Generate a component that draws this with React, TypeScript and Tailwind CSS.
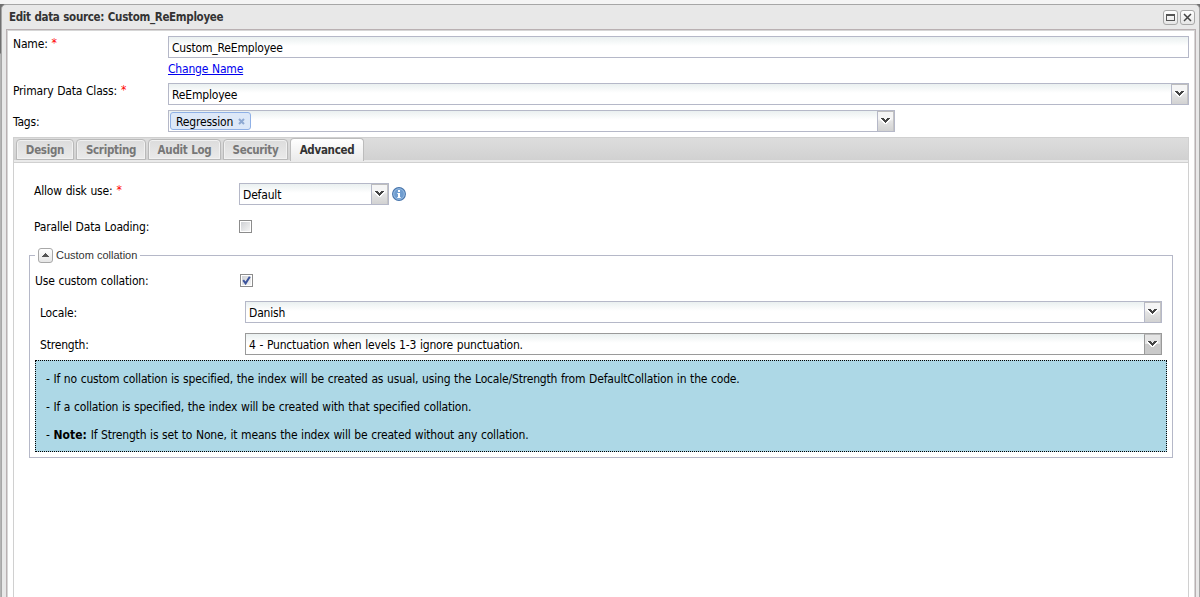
import type { ReactNode } from "react";

type ComboProps = {
  value?: string;
  className?: string;
  focused?: boolean;
  children?: ReactNode;
};

// Pixel arrow used by every combo trigger
function Trigger({ focused = false }: { focused?: boolean }) {
  return (
    <div
      className={`flex w-[17px] shrink-0 justify-center border-l border-t border-r border-t-[#bdbdbd] border-r-[#c4c4c4] pt-[5px] ${
        focused
          ? "border-l-[#9a9a9a] bg-linear-to-b from-[#e4e4e4] from-45% to-[#c9c9c9] to-50%"
          : "border-l-[#b5b8c8] bg-linear-to-b from-[#f5f5f5] from-35% via-[#e3e3e3] via-50% to-[#d2d2d2]"
      }`}
    >
      <svg width="11" height="8" viewBox="0 0 11 8" shapeRendering="crispEdges">
        <path d="M0 1h4v1h3V1h4v2h-1v1H9v1H8v1H7v1H4V6H3V5H2V4H1V3H0z" fill="#fff" />
        <path d="M1 1h3v1h1v1h1V2h1V1h3v1H9v1H8v1H7v1H6v1H5V5H4V4H3V3H2V2H1z" fill="#444" />
      </svg>
    </div>
  );
}

function Combo({ value, className = "", focused = false, children }: ComboProps) {
  return (
    <div
      className={`flex h-[22px] border ${focused ? "border-[#9a9a9a]" : "border-[#b5b8c8]"} ${className}`}
    >
      <div className="flex min-w-0 flex-1 items-center bg-linear-to-b from-[#eaf0f0] to-white to-45% pl-[3px]">
        {children}
        {value && <span className="whitespace-nowrap pt-px">{value}</span>}
      </div>
      <Trigger focused={focused} />
    </div>
  );
}

function Checkbox({ checked = false }: { checked?: boolean }) {
  return (
    <div className="flex size-[13px] items-center justify-center border border-[#8c8c8c] bg-white">
      <div className="size-[9px] bg-linear-to-br from-[#cfd1d5] to-[#f4f4f4]">
        {checked && (
          <svg width="9" height="9" viewBox="0 0 9 9">
            <path d="M1.2 4.2 3.6 7.4 7.8 0.8" fill="none" stroke="#3c549c" strokeWidth="2" />
          </svg>
        )}
      </div>
    </div>
  );
}

function Tool({ children }: { children: ReactNode }) {
  return (
    <div className="flex size-[15px] items-center justify-center rounded-[3px] border border-[#a8a8a8] bg-linear-to-b from-white to-[#e6e6e6]">
      {children}
    </div>
  );
}

const Star = () => <span className="ml-[4px] align-[1px] leading-none text-[#ff0000]">*</span>;

const tabs = [
  { name: "Design", width: "w-[58px]" },
  { name: "Scripting", width: "w-[70px]" },
  { name: "Audit Log", width: "w-[73px]" },
  { name: "Security", width: "w-[65px]" },
  { name: "Advanced", width: "w-[74px]" },
];

function TabBar({ active }: { active: string }) {
  return (
    <div className="h-[26px] border border-[#d0d0d0] bg-[#eaeaea]">
      <div className="flex h-[22px] items-end gap-[2px] bg-linear-to-b from-[#dddddd] to-[#d1d1d1] pl-[2px]">
        {tabs.map((tab) => (
          <div
            key={tab.name}
            className={`flex items-center justify-center rounded-t-[4px] border text-[11.5px] font-bold tracking-[-0.3px] ${tab.width} ${
              tab.name === active
                ? "relative z-10 -mb-px h-[23px] border-[#bcbcbc] border-b-0 bg-linear-to-b from-white to-[#eaeaea] pb-px text-[#333]"
                : "h-[21px] border-[#b9b9b9] bg-linear-to-b from-[#dcdcdc] to-[#eaeaea] text-[#777] shadow-[inset_0_0_0_1px_#f1f1f1]"
            }`}
          >
            <span className="whitespace-nowrap">{tab.name}</span>
          </div>
        ))}
      </div>
    </div>
  );
}

function Collation() {
  return (
    <div className="relative mx-[15px] mt-[22px] h-[203px] border border-[#b5b8c8] px-[5px]">
      {/* Legend sits over the top border */}
      <div className="absolute -top-[8px] left-[5px] flex h-[15px] items-center bg-white pl-[3px] pr-[3px]">
        <Tool>
          <svg width="9" height="5" viewBox="0 0 9 5" shapeRendering="crispEdges">
            <path d="M4 0h1v1h1v1h1v1h1v1H1V3h1V2h1V1h1z" fill="#555" />
          </svg>
        </Tool>
        <span className="-mt-px ml-[3px] whitespace-nowrap font-['Liberation_Sans'] text-[11px] tracking-normal text-[#333] [word-spacing:0]">
          Custom collation
        </span>
      </div>

      <div className="flex h-[45px] items-start pt-[18px]">
        <span className="w-[205px]">Use custom collation:</span>
        <Checkbox checked />
      </div>
      <div className="flex h-[32px] items-start pl-[5px] pr-[5px]">
        <span className="w-[205px] pt-[5px]">Locale:</span>
        <Combo value="Danish" className="flex-1" />
      </div>
      <div className="flex h-[27px] items-start pl-[5px] pr-[5px]">
        <span className="w-[205px] pt-[5px]">Strength:</span>
        <Combo value="4 - Punctuation when levels 1-3 ignore punctuation." className="flex-1" focused />
      </div>
      <div className="h-[92px] border border-dotted border-black bg-[#add8e6] pl-[10px] pt-[4px] leading-[28px]">
        <p>- If no custom collation is specified, the index will be created as usual, using the Locale/Strength from DefaultCollation in the code.</p>
        <p>- If a collation is specified, the index will be created with that specified collation.</p>
        <p>
          - <b className="tracking-[0.05px]">Note:</b> If Strength is set to None, it means the index will be created without any collation.
        </p>
      </div>
    </div>
  );
}

export default function App() {
  return (
    <div className="h-[597px] w-[1200px] overflow-hidden bg-linear-to-b from-[#707070] from-[53px] to-[#b4b4b4] to-[54px] font-['DejaVu_Sans_Condensed','DejaVu_Sans',sans-serif] text-[12px] leading-[14px] tracking-[-0.18px] text-black [font-stretch:condensed] [word-spacing:0.5px]">
      <div className="h-[4px] bg-[#f4f4f4]" />
      <div className="ml-px flex h-[600px] flex-col rounded-t-[5px] border border-[#a6a6a6] bg-[#e8e8e8] px-[4px]">
        <div className="flex h-[24px] shrink-0 items-center justify-between pl-[3px] text-[#333]">
          <span className="text-[11.5px] font-bold tracking-[-0.32px]">Edit data source: Custom_ReEmployee</span>
          <div className="flex gap-[2px]">
            <Tool>
              <svg width="9" height="7" viewBox="0 0 9 7" shapeRendering="crispEdges">
                <path d="M0 0h9v7H0zM1 2v4h7V2z" fill="#555" fillRule="evenodd" />
              </svg>
            </Tool>
            <Tool>
              <svg width="9" height="9" viewBox="0 0 9 9">
                <path d="M1 1l7 7M8 1L1 8" stroke="#444" strokeWidth="1.5" />
              </svg>
            </Tool>
          </div>
        </div>

        <div className="mr-[-1px] flex-1 border border-[#b9b0b2] bg-white">
          <div className="h-full border border-[#d6d6d6] px-[5px] pt-[5px]">
            <div className="flex h-[47px]">
              <span className="w-[155px] pt-px">Name:<Star /></span>
              <div className="flex-1">
                <div className="flex h-[22px] items-center border border-[#b5b8c8] bg-linear-to-b from-[#eaf0f0] to-white to-45% pl-[3px] pt-px">
                  Custom_ReEmployee
                </div>
                <a className="mt-[4px] inline-block text-[#0000ee] underline">Change Name</a>
              </div>
            </div>
            <div className="flex h-[27px]">
              <span className="w-[155px] pt-px">Primary Data Class:<Star /></span>
              <Combo value="ReEmployee" className="flex-1" />
            </div>
            <div className="flex h-[27px]">
              <span className="w-[155px] pt-[5px]">Tags:</span>
              <Combo className="w-[727px]">
                <div className="-ml-[2px] flex h-[18px] w-[81px] items-center justify-between rounded-[3px] border border-[#8fb0e6] bg-[#dde8f8] pl-[5px] pr-[5px]">
                  <span className="pt-px">Regression</span>
                  <svg width="7" height="7" viewBox="0 0 7 7">
                    <path d="M1 1l5 5M6 1L1 6" stroke="#8ea9d2" strokeWidth="2" />
                  </svg>
                </div>
              </Combo>
            </div>

            <TabBar active="Advanced" />
            <div className="h-[450px] border-x border-[#d0d0d0] pt-[20px]">
              <div className="flex h-[37px] pl-[20px]">
                <span className="w-[205px] pt-px">Allow disk use:<Star /></span>
                <Combo value="Default" className="w-[150px]" />
                <svg className="ml-[3px] mt-[4px]" width="14" height="14" viewBox="0 0 14 14">
                  <circle cx="7" cy="7" r="6.4" fill="#6f9dd0" stroke="#4975ab" strokeWidth="1.1" />
                  <circle cx="7" cy="7" r="5.3" fill="none" stroke="#9fc1e4" strokeWidth="0.8" />
                  <path d="M6 3h2v2H6zM5.3 6H8v4h.7v1H5.3v-1H6V7h-.7z" fill="#fff" />
                </svg>
              </div>
              <div className="flex h-[13px] items-center pl-[20px]">
                <span className="w-[205px]">Parallel Data Loading:</span>
                <Checkbox />
              </div>
              <Collation />
            </div>
          </div>
        </div>
      </div>
    </div>
  );
}
